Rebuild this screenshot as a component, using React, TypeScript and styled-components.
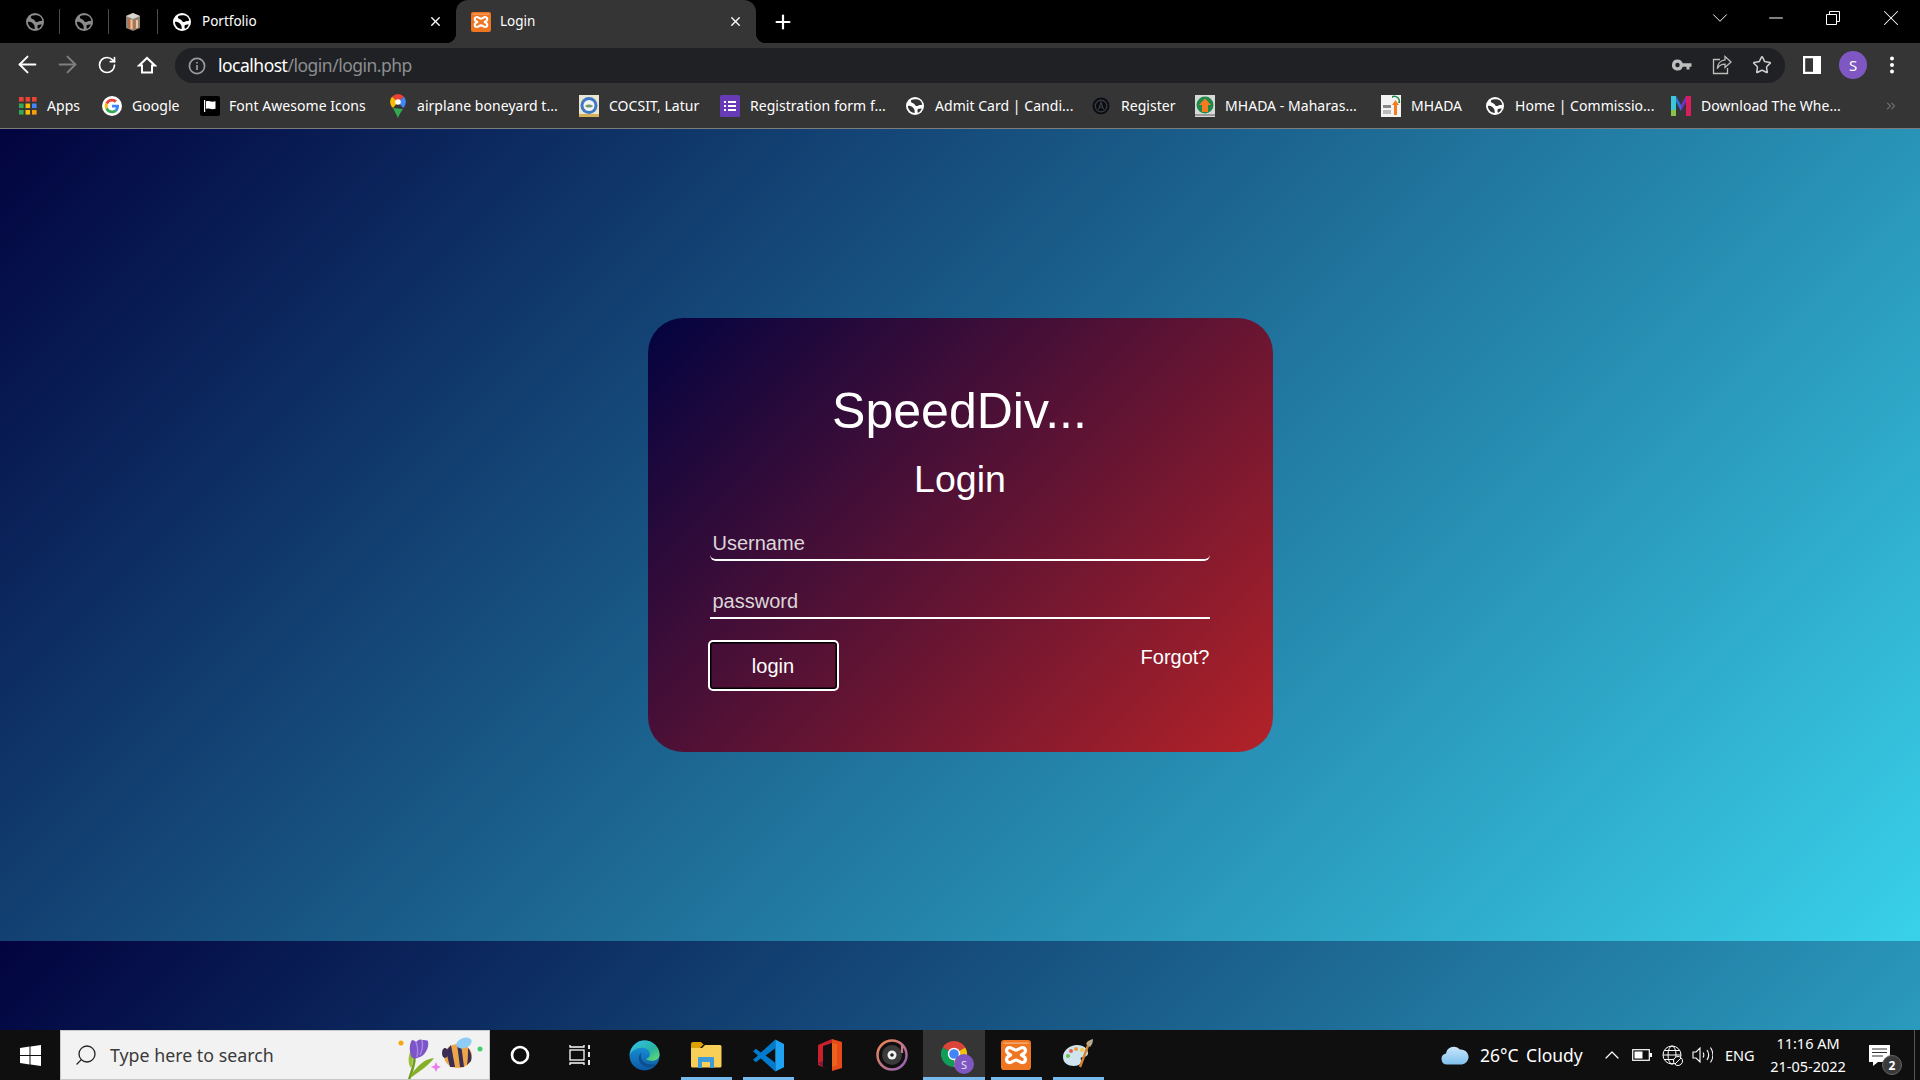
import React from "react";
import styled, { createGlobalStyle } from "styled-components";
import { ArrowLeft, ArrowRight, RotateCw, Plus, X, ChevronDown, Minus, ChevronUp, Search, Star, ChevronsRight } from "lucide-react";

const UI = `"Noto Sans", "Open Sans", sans-serif`;
const WEB = `"Liberation Sans", Arial, sans-serif`;

const Global = createGlobalStyle`
  html, body { margin: 0; padding: 0; height: 100%; overflow: hidden; background: #000; }
  * { box-sizing: border-box; }
  input::placeholder { color: #dcd6d8; opacity: 1; }
`;

const Screen = styled.div`
  width: 1920px;
  height: 1080px;
  display: flex;
  flex-direction: column;
  font-family: ${UI};
`;

/* ---------- tab strip ---------- */
const TabStrip = styled.div`
  height: 43px;
  background: #000;
  display: flex;
  align-items: stretch;
  padding-left: 11px;
  color: #fff;
`;
const PinnedTab = styled.div`
  width: 49px;
  display: flex;
  align-items: center;
  justify-content: center;
  & > span {
    width: 100%;
    height: 25px;
    display: flex;
    align-items: center;
    justify-content: center;
    border-right: 1px solid #4c4c4c;
  }
`;
const Tab = styled.div<{ $active?: boolean; $width: number; $pad: number; $gap: number }>`
  width: ${(p) => p.$width}px;
  padding: 0 13px 0 ${(p) => p.$pad}px;
  display: flex;
  align-items: center;
  gap: ${(p) => p.$gap}px;
  font-size: 13.5px;
  position: relative;
  background: ${(p) => (p.$active ? "#353535" : "transparent")};
  border-radius: ${(p) => (p.$active ? "12px 12px 0 0" : "0")};
  ${(p) =>
    p.$active &&
    `&::before, &::after {
      content: ""; position: absolute; bottom: 0; width: 10px; height: 10px;
    }
    &::before { left: -10px; background: radial-gradient(circle at 0 0, #000 10px, #353535 10.5px); }
    &::after { right: -10px; background: radial-gradient(circle at 100% 0, #000 10px, #353535 10.5px); }`}
`;
const TabTitle = styled.span`
  flex: 1;
  white-space: nowrap;
  padding-bottom: 2px;
`;
const NewTab = styled.div`
  width: 34px;
  margin-left: 10px;
  display: flex;
  align-items: center;
  justify-content: center;
`;
const WindowControls = styled.div`
  margin-left: auto;
  display: flex;
  align-items: center;
  height: 36px;
`;
const WindowButton = styled.div<{ $width: number }>`
  width: ${(p) => p.$width}px;
  display: flex;
  align-items: center;
  justify-content: center;
`;

/* ---------- toolbar ---------- */
const Toolbar = styled.div`
  height: 40px;
  background: #353535;
  display: flex;
  align-items: flex-start;
  padding: 5px 0 0 7px;
  color: #fff;
`;
const ToolButton = styled.div`
  width: 40px;
  height: 35px;
  flex: none;
  padding-bottom: 2px;
  display: flex;
  align-items: center;
  justify-content: center;
`;
const Omnibox = styled.div`
  width: 1610px;
  height: 35px;
  margin: 0 7px 0 8px;
  background: #202124;
  border-radius: 18px;
  display: flex;
  align-items: center;
  padding: 0 3px 0 13px;
`;
const UrlText = styled.div`
  margin-left: 12px;
  padding-bottom: 2px;
  font-size: 17.5px;
  letter-spacing: -0.5px;
  flex: 1;
  white-space: nowrap;
  color: #8c8e91;
  & > b { font-weight: 400; color: #fff; }
`;
const Avatar = styled.div`
  width: 28px;
  height: 28px;
  margin-left: 2px;
  border-radius: 50%;
  background: #7e57c2;
  color: #fff;
  font-size: 15px;
  display: flex;
  align-items: center;
  justify-content: center;
`;

/* ---------- bookmarks ---------- */
const BookmarkBar = styled.div`
  height: 46px;
  background: #353535;
  border-bottom: 1px solid #7c7c7c;
  display: flex;
  align-items: center;
  padding-left: 19px;
  color: #fff;
  font-size: 14px;
  letter-spacing: 0.04px;
`;
const Bookmark = styled.div<{ $width: number; $gap: number }>`
  width: ${(p) => p.$width}px;
  flex: none;
  display: flex;
  align-items: center;
  gap: ${(p) => p.$gap}px;
  white-space: nowrap;
`;
const More = styled.div`
  margin-left: 23px;
  color: #6f6f6f;
  display: flex;
`;

/* ---------- page ---------- */
const Viewport = styled.main`
  flex: 1;
  background: linear-gradient(135deg, #02033f 0%, #39d1ea 100%) 0 0 / 100% 812px repeat;
`;
const PageBody = styled.div`
  height: 812px;
  display: flex;
  align-items: center;
  justify-content: center;
`;
const Card = styled.form`
  width: 625px;
  padding: 64px 63px 61px 60px;
  border-radius: 35px;
  background: linear-gradient(135deg, #020340 0%, #b32228 100%);
  font-family: ${WEB};
  color: #fff;
  display: flex;
  flex-direction: column;
`;
const Title = styled.h1`
  margin: 0;
  padding: 1px 0 0 2px;
  font-size: 50px;
  line-height: 56px;
  font-weight: 400;
  text-align: center;
`;
const Subtitle = styled.h2`
  margin: 19px 0 0;
  padding-left: 3px;
  font-size: 37.5px;
  line-height: 42px;
  font-weight: 400;
  text-align: center;
`;
const Field = styled.input<{ $rounded?: boolean; $top: number }>`
  display: block;
  margin: ${(p) => p.$top}px 0 0 2px;
  width: calc(100% - 2px);
  height: 30px;
  padding: 0 2px 4px 3px;
  background: transparent;
  border: none;
  border-bottom: 2px solid #fff;
  border-radius: ${(p) => (p.$rounded ? "0 0 6px 6px" : "0")};
  font: 20px ${WEB};
  color: #fff;
  outline: none;
`;
const ActionRow = styled.div`
  margin-top: 21px;
  display: flex;
  justify-content: space-between;
  align-items: flex-start;
`;
const LoginButton = styled.button`
  width: 131px;
  height: 51px;
  background: transparent;
  border: 2px solid #fff;
  border-radius: 5px;
  box-shadow: inset 0 0 0 1.5px #000;
  color: #fff;
  font: 20px ${WEB};
  padding: 2px 0 0;
`;
const ForgotLink = styled.a`
  margin-top: 6px;
  font-size: 20px;
  line-height: 23px;
  color: #fff;
`;

/* ---------- taskbar ---------- */
const Taskbar = styled.footer`
  height: 50px;
  flex: none;
  background: #0f0f0f;
  display: flex;
  align-items: stretch;
  color: #fff;
`;
const StartButton = styled.div`
  width: 60px;
  display: flex;
  align-items: center;
  justify-content: center;
`;
const SearchBox = styled.div`
  width: 430px;
  background: #f2f2f2;
  border: 1px solid #c8c8c8;
  display: flex;
  align-items: center;
  padding-left: 13px;
  color: #3a3a3a;
  font-size: 17.8px;
  overflow: hidden;
`;
const SearchText = styled.span`
  margin-left: 12px;
  flex: 1;
`;
const SystemButton = styled.div`
  width: 60px;
  display: flex;
  align-items: center;
  justify-content: center;
`;
const AppList = styled.div`
  margin-left: 3px;
  display: flex;
`;
const AppButton = styled.div<{ $open?: boolean; $active?: boolean }>`
  width: 62px;
  position: relative;
  display: flex;
  align-items: center;
  justify-content: center;
  background: ${(p) => (p.$active ? "#353535" : "transparent")};
  &::after {
    content: "";
    display: ${(p) => (p.$open ? "block" : "none")};
    position: absolute;
    bottom: 0;
    left: ${(p) => (p.$active ? 0 : 6)}px;
    right: ${(p) => (p.$active ? 0 : 5)}px;
    height: 3px;
    background: #76b9ed;
  }
`;
const ChromeWrap = styled.div`
  position: relative;
  width: 32px;
  height: 32px;
`;
const ProfileBadge = styled.span`
  position: absolute;
  right: -4px;
  bottom: -3px;
  width: 20px;
  height: 20px;
  border-radius: 50%;
  background: #7e57c2;
  color: #e8e0f8;
  font-size: 11px;
  display: flex;
  align-items: center;
  justify-content: center;
`;
const Tray = styled.div`
  margin-left: auto;
  display: flex;
  align-items: center;
  font-size: 17.5px;
`;
const TrayCell = styled.div<{ $width: number }>`
  width: ${(p) => p.$width}px;
  display: flex;
  align-items: center;
  justify-content: center;
  white-space: nowrap;
`;
const Weather = styled.div`
  font-size: 17.5px;
  width: 122px;
  padding-left: 5px;
  word-spacing: 3px;
  white-space: nowrap;
`;
const Lang = styled.div`
  width: 51px;
  padding-left: 8px;
  font-size: 14.5px;
`;
const Clock = styled.div`
  width: 80px;
  text-align: center;
  font-size: 14.5px;
  line-height: 23px;
  white-space: nowrap;
`;
const NotifyCell = styled.div`
  width: 66px;
  height: 100%;
  padding-right: 4px;
  position: relative;
  display: flex;
  align-items: center;
  justify-content: center;
`;
const NotifyBadge = styled.span`
  position: absolute;
  left: 34px;
  top: 25px;
  width: 20px;
  height: 20px;
  border-radius: 50%;
  background: #3a3a3a;
  border: 1px solid #666;
  font-size: 12px;
  font-weight: 700;
  display: flex;
  align-items: center;
  justify-content: center;
`;
const ShowDesktop = styled.div`
  width: 6px;
  height: 100%;
  border-left: 1px solid #555;
`;

/* ---------- drawings ---------- */
const Globe = ({ size = 18, color = "#fff", ink = "#000" }: { size?: number; color?: string; ink?: string }) => (
  <svg width={size} height={size} viewBox="0 0 24 24">
    <circle cx="12" cy="12" r="12" fill={color} />
    <path fill={ink} d="M7 4C10 2.500 16 2.500 19 5 20.500 6.500 21.300 8 21.700 10 19.500 11 17.500 10.500 16 11.500 14 13 12 11 11.500 9.500 10 8 7 8 6.500 6Z" />
    <path fill={ink} d="M2.500 12C5 11 8.500 12.500 10 15 11 16.500 12 18 11.500 21.400 6.500 21 2.800 17 2.500 12Z" />
    <path fill={ink} d="M16 16C18 15 20 15 21 15.500 20 18 18 20 16 21 15 19.500 15 17 16 16Z" />
  </svg>
);
const Xampp = ({ size = 20 }: { size?: number }) => (
  <svg width={size} height={size} viewBox="0 0 24 24">
    <rect width="24" height="24" rx="2.500" fill="#ee7623" />
    <rect x="2" y="2" width="20" height="1" fill="#f7b482" />
    <path fill="none" stroke="#fff" strokeWidth="2.600" strokeLinejoin="round" d="M7 6C9 6 10 8 12 8S15 6 17 6c3 0 3.400 3.600 1 5l-1.600 1 1.600 1c2.400 1.400 2 5-1 5-2 0-3-2-5-2s-3 2-5 2c-3 0-3.400-3.600-1-5L7.600 12 6 11C3.600 9.600 4 6 7 6Z" />
  </svg>
);
const BoxIcon = () => (
  <svg width="18" height="20" viewBox="0 0 18 20">
    <path fill="#8d8478" d="M9 1 16 4v12l-7 3-7-3V4Z" />
    <path fill="#d9d4cc" d="M9 1 16 4 9 7 2 4Z" />
    <path fill="#c46a3c" d="M4 7h2v9H4zM9 8h2v10H9z" />
    <path fill="#e9c9a4" d="M6.500 7.500h2V17h-2zM12 8h2v8h-2z" />
  </svg>
);
const HomeIcon = () => (
  <svg width="20" height="20" viewBox="0 0 24 24" fill="none" stroke="#fff" strokeWidth="2.400">
    <path d="M2.500 12.500 12 3.500l9.500 9H18V21H6v-8.500Z" strokeLinejoin="miter" />
  </svg>
);
const InfoIcon = () => (
  <svg width="18" height="18" viewBox="0 0 18 18" fill="none">
    <circle cx="9" cy="9" r="7.600" stroke="#9a9b9d" strokeWidth="1.700" />
    <path d="M9 8v5M9 5v1.600" stroke="#9a9b9d" strokeWidth="1.700" />
  </svg>
);
const KeyIcon = () => (
  <svg width="20" height="12" viewBox="0 0 20 12">
    <path fill="#bdbdbd" fillRule="evenodd" d="M5.500 0.500a5.500 5.500 0 0 1 5.200 3.800H19.500v3.400H17.500v2.800h-3V7.700h-3.800A5.500 5.500 0 1 1 5.500.5Zm0 3.300a2.200 2.200 0 1 0 0 4.400 2.200 2.200 0 0 0 0-4.400Z" />
  </svg>
);
const ShareIcon = () => (
  <svg width="20" height="20" viewBox="0 0 20 20" fill="none" stroke="#bdbdbd" strokeWidth="1.300">
    <path d="M8 4.500H1.500v14h14V13" />
    <path d="M13 1.500 19 7l-6 5.500V9.200C9.500 9.200 7 10.500 5.300 13.600 5.600 9 8.400 5.200 13 4.800Z" />
  </svg>
);
const SidePanel = () => (
  <svg width="18" height="18" viewBox="0 0 18 18">
    <path fill="#fff" fillRule="evenodd" d="M0 0h18v18H0Zm2.200 2.200v13.600h7.800V2.200Z" />
  </svg>
);
const Dots = () => (
  <svg width="6" height="18" viewBox="0 0 6 18" fill="#fff">
    <circle cx="3" cy="2.500" r="2" /><circle cx="3" cy="9" r="2" /><circle cx="3" cy="15.500" r="2" />
  </svg>
);
const AppsGrid = () => (
  <svg width="18" height="18" viewBox="0 0 18 18">
    {["#ea4335","#ea4335","#ea4335","#34a853","#fbbc05","#4285f4","#34a853","#fbbc05","#f59e0b"].map((c, i) => (
      <rect key={i} x={(i % 3) * 6.5} y={Math.floor(i / 3) * 6.5} width="4.600" height="4.600" fill={c} />
    ))}
  </svg>
);
const GoogleIcon = () => (
  <svg width="20" height="20" viewBox="0 0 48 48">
    <circle cx="24" cy="24" r="24" fill="#fff" />
    <g transform="translate(6.500 6.500) scale(.73)">
      <path fill="#EA4335" d="M24 9.500c3.500 0 6.700 1.200 9.200 3.600l6.900-6.900C35.900 2.400 30.500 0 24 0 14.600 0 6.500 5.400 2.600 13.200l8 6.200C12.400 13.700 17.700 9.500 24 9.500Z" />
      <path fill="#4285F4" d="M47 24.500c0-1.600-.1-3.100-.4-4.500H24v9h12.900c-.6 3-2.200 5.500-4.700 7.200l7.700 6c4.500-4.200 7.100-10.300 7.100-17.700Z" />
      <path fill="#FBBC05" d="M10.500 28.600c-.5-1.400-.8-3-.8-4.600s.3-3.200.8-4.600l-8-6.200C.9 16.500 0 20.100 0 24s.9 7.500 2.600 10.800Z" />
      <path fill="#34A853" d="M24 48c6.500 0 11.900-2.100 15.900-5.800l-7.700-6c-2.200 1.500-4.900 2.300-8.200 2.300-6.300 0-11.600-4.200-13.500-9.900l-8 6.200C6.500 42.600 14.600 48 24 48Z" />
    </g>
  </svg>
);
const FlagIcon = () => (
  <svg width="20" height="20" viewBox="0 0 20 20">
    <rect width="20" height="20" rx="2" fill="#000" />
    <path fill="#fff" d="M4 4h1.200v12H4zM6 5.500c2.500-1.400 4.500 1.200 9.500-.2v7.400c-5 1.400-7-1.200-9.500.2Z" />
  </svg>
);
const PinIcon = () => (
  <svg width="16" height="24" viewBox="0 0 16 24">
    <path fill="#34a853" d="M3 14 8 24c1-3 3-6 5-9Z" />
    <path fill="#ea4335" d="M8 0a8 8 0 0 1 6 2.700L8 8 2 2.700A8 8 0 0 1 8 0Z" />
    <path fill="#4285f4" d="M14 2.700A8 8 0 0 1 13 14L8 8Z" />
    <path fill="#fbbc05" d="M2 2.700A8 8 0 0 0 3 14L8 8Z" />
    <circle cx="8" cy="8" r="2.800" fill="#fff" />
  </svg>
);
const CocsitIcon = () => (
  <svg width="20" height="22" viewBox="0 0 20 22">
    <rect width="20" height="22" fill="#e9e6d4" />
    <circle cx="10" cy="10.500" r="8.500" fill="#3f78c4" />
    <circle cx="10" cy="10.500" r="5.500" fill="#f2f2f2" />
    <path d="M6 11c2-2 6-2 8 0-2 2-6 2-8 0Z" fill="#6c9a6c" />
    <rect y="19" width="20" height="3" fill="#d6b35a" />
  </svg>
);
const FormsIcon = () => (
  <svg width="20" height="22" viewBox="0 0 20 22">
    <rect width="20" height="22" rx="1.500" fill="#673ab7" />
    <path fill="#fff" d="M4 6h2v2H4zM8 6h8v2H8zM4 10h2v2H4zM8 10h8v2H8zM4 14h2v2H4zM8 14h8v2H8z" />
  </svg>
);
const RegisterIcon = () => (
  <svg width="18" height="18" viewBox="0 0 18 18" fill="none">
    <circle cx="9" cy="9" r="8.500" fill="#0b0d12" />
    <circle cx="9" cy="9" r="5.800" stroke="#3b3f46" strokeWidth="1.200" />
    <path d="M6.500 12.500 9 5.500l2.500 7M7.400 10.300h3.200" stroke="#3b3f46" strokeWidth="1.100" />
  </svg>
);
const MhadaIcon = () => (
  <svg width="20" height="22" viewBox="0 0 20 22">
    <rect width="20" height="22" fill="#d8d8d8" />
    <circle cx="10" cy="10" r="8.500" fill="#1c8a4a" />
    <path fill="#f47b20" d="M10 3.500 16 10h-3v7H7v-7H4Z" />
    <rect y="19" width="20" height="2" fill="#9a9a9a" />
  </svg>
);
const MhadaSmallIcon = () => (
  <svg width="20" height="22" viewBox="0 0 20 22">
    <rect width="20" height="22" fill="#f3f3f3" />
    <path fill="#1c8a4a" d="M11 1a6 6 0 0 1 8 7h-2a4 4 0 0 0-6-5Z" />
    <path fill="#f47b20" d="M14.500 5 18 10h-2v10h-3V10h-2Z" />
    <rect x="2" y="10" width="8" height="3" fill="#888" />
    <rect x="2" y="15" width="8" height="4" fill="#bbb" />
  </svg>
);
const MLogo = () => (
  <svg width="20" height="20" viewBox="0 0 20 20">
    <path fill="#3cc7d9" d="M0 0h5v14H0Z" />
    <path fill="#8bc34a" d="M0 14h5v6H0Z" />
    <path fill="#2f6fd6" d="M5 0 10 9v6L5 6Z" />
    <path fill="#7a2fc4" d="M15 0 10 9v6l5-9Z" />
    <path fill="#d81e5b" d="M15 0h5v20h-5Z" />
  </svg>
);
const WindowsLogo = () => (
  <svg width="21" height="21" viewBox="0 0 21 21" fill="#fff">
    <path d="M0 3 9.500 1.600V10H0ZM10.500 1.400 21 0V10H10.500ZM0 11h9.500v8.400L0 18ZM10.500 11H21v10l-10.500-1.500Z" />
  </svg>
);
const CortanaRing = () => (
  <svg width="20" height="20" viewBox="0 0 20 20" fill="none">
    <circle cx="10" cy="10" r="8" stroke="#fff" strokeWidth="2.600" />
  </svg>
);
const TaskView = () => (
  <svg width="22" height="22" viewBox="0 0 22 22" fill="none" stroke="#fff" strokeWidth="1.300">
    <path d="M1 1v2h14V1M1 21v-2h14v2" />
    <rect x="1" y="6" width="14" height="10" />
    <path d="M20 1v4M20 8v5M20 16v5" strokeWidth="1.800" />
  </svg>
);
const TulipBee = () => (
  <svg width="93" height="50" viewBox="0 0 93 50">
    <circle cx="5" cy="13" r="2.500" fill="#f5a90d" />
    <path d="M13 50C16 40 20 32 18 22" stroke="#6f9d1f" strokeWidth="2.500" fill="none" />
    <path d="M14 48c8-5 20-14 24-20-10 1-16 8-21 14Z" fill="#86b026" />
    <path d="M15 38c-3-4-3-10-1-16 3 4 4 10 1 16Z" fill="#9bc13a" />
    <path d="M16 28c-3-6-3-14 0-18 2 0 3 1 4 2 2-2 4-3 6-2 3 0 5 0 6 1 1 5-1 11-6 15-4 2-7 3-10 2Z" fill="#7d55c9" />
    <path d="M20 12c2 5 2 10 1 15M26 10c1 5 0 11-2 15" stroke="#a688e0" strokeWidth="1.500" fill="none" />
    <path d="M40 32l1.500 3.500 3.500 1.500-3.500 1.500L40 42l-1.500-3.500L35 37l3.500-1.500Z" fill="#ec7de8" />
    <ellipse cx="62" cy="26" rx="14" ry="12" fill="#eba64a" />
    <path d="M55 15l4 22h-5l-4-16ZM65 14l3 23h-4l-3-23Z" fill="#3a2d55" />
    <path d="M72 18c3 3 4 9 3 13l-4 4c1-5 1-12 1-17Z" fill="#3a2d55" />
    <ellipse cx="49" cy="23" rx="3" ry="5" fill="#3a2d55" />
    <ellipse cx="68" cy="13" rx="8" ry="5" fill="#8dcdf5" transform="rotate(-20 68 13)" />
    <circle cx="84" cy="19" r="2.500" fill="#3ecf6e" />
  </svg>
);
const EdgeIcon = () => (
  <svg width="31" height="31" viewBox="0 0 32 32">
    <defs>
      <linearGradient id="eg1" x1="0" y1="0" x2="1" y2="1"><stop offset="0" stopColor="#35c1f1" /><stop offset=".6" stopColor="#28b5a0" /><stop offset="1" stopColor="#6fe06a" /></linearGradient>
      <linearGradient id="eg2" x1="0" y1="0" x2="0" y2="1"><stop offset="0" stopColor="#1b9de2" /><stop offset="1" stopColor="#0c59a4" /></linearGradient>
    </defs>
    <circle cx="16" cy="16" r="15.500" fill="url(#eg2)" />
    <path fill="url(#eg1)" d="M16 .5C24.500.5 31.500 7 31.500 15c0 4-3.500 6.500-7.500 6.500-3 0-5.500-1-6.500-2 3-1 4.500-3 4-5.500C21 10 17 8 13 8 8 8 3 11 .7 15.500 1.500 7 8 .5 16 .5Z" />
    <path fill="#0e4f8f" d="M13 13c-4 3-4 9 1 13 4 3 9 3 13 0 .8-.6.300-1.300-.6-1-4 1-9 0-12-3-2.500-3-3-6-1.400-9Z" />
  </svg>
);
const FolderIcon = () => (
  <svg width="32" height="26" viewBox="0 0 32 26">
    <path fill="#e0a100" d="M1 2a2 2 0 0 1 2-2h8l3 3h-1l-3 3H1Z" />
    <path fill="#f9cf58" d="M1 6h11l3-3h15a1.500 1.500 0 0 1 1.500 1.500V24a1.500 1.500 0 0 1-1.500 1.500H2.500A1.500 1.500 0 0 1 1 24Z" />
    <path fill="#3c9bd8" d="M9 15h14a1 1 0 0 1 1 1v10h-4v-6h-8v6H8V16a1 1 0 0 1 1-1Z" />
  </svg>
);
const VSCodeIcon = () => (
  <svg width="31" height="33" viewBox="0 0 32 33">
    <path fill="#007acc" d="M3 9.500 8 13.500 23 0v9L13 16.500 23 24v9L8 19.500 3 23.500 0 21l5-4.500L0 12Z" />
    <path fill="#1fa2f2" d="M23 0 32 4.500v24L23 33Z" />
  </svg>
);
const OfficeIcon = () => (
  <svg width="24" height="32" viewBox="0 0 24 32">
    <path fill="#e64a19" d="M14 0 24 3v26l-10 3Z" />
    <path fill="#c9202c" d="M14 0 0 6v20l14 6-9-4V7l9-3Z" />
    <path fill="#f47b20" d="M14 4v24l5-2V5Z" opacity=".5" />
    <path fill="#7b1a3a" d="M0 24 5 22v6Z" />
  </svg>
);
const GrooveIcon = () => (
  <svg width="32" height="32" viewBox="0 0 32 32" fill="none">
    <defs>
      <linearGradient id="gr" x1="0" y1="0" x2="1" y2="1"><stop offset="0" stopColor="#f08a4b" /><stop offset="1" stopColor="#8f5fb8" /></linearGradient>
    </defs>
    <circle cx="16" cy="16" r="14.500" stroke="url(#gr)" strokeWidth="2.500" />
    <circle cx="16" cy="16" r="10" fill="#3b3b3b" />
    <circle cx="16" cy="16" r="4.500" fill="#f2f2f2" />
    <circle cx="16" cy="16" r="1.800" fill="#222" />
    <path d="M26 6v8" stroke="#c47a8c" strokeWidth="2.200" />
  </svg>
);
const ChromeIcon = () => (
  <svg width="32" height="32" viewBox="0 0 32 32">
    <path fill="#db4437" d="M16 15 4.740 8.500A13 13 0 0 1 27.260 8.500Z" />
    <path fill="#f4c20d" d="M16 15 27.260 8.500A13 13 0 0 1 16 28Z" />
    <path fill="#0f9d58" d="M16 15 16 28A13 13 0 0 1 4.740 8.500Z" />
    <circle cx="16" cy="15" r="6.200" fill="#fff" />
    <circle cx="16" cy="15" r="4.800" fill="#4285f4" />
  </svg>
);
const PaletteIcon = () => (
  <svg width="32" height="32" viewBox="0 0 32 32">
    <path fill="#cfe4ef" d="M1 18C1 11 8 6 15 6s11 4 11 8c0 3-3 4-5 4s-3 1-2 3c1 3-2 6-7 6C6 27 1 24 1 18Z" />
    <circle cx="6" cy="17" r="2" fill="#6cc24a" />
    <circle cx="9" cy="12" r="2" fill="#e35d5d" />
    <circle cx="14" cy="10" r="2" fill="#ef9a3c" />
    <circle cx="20" cy="11" r="2" fill="#f2c744" />
    <path d="M27 4 18 28" stroke="#d8812c" strokeWidth="2.400" />
    <path d="M24 5c1-3 4-4 7-5 0 3-1 6-3 8Z" fill="#b9a98a" />
  </svg>
);
const CloudIcon = () => (
  <svg width="28" height="20" viewBox="0 0 28 20">
    <defs>
      <linearGradient id="cl" x1="0" y1="0" x2="0" y2="1"><stop offset="0" stopColor="#c9e6fa" /><stop offset="1" stopColor="#7fc0ee" /></linearGradient>
    </defs>
    <path fill="url(#cl)" d="M6 19.500A5.500 5.500 0 0 1 5 8.600 8 8 0 0 1 19 4.500 7.500 7.500 0 0 1 21 19.500Z" />
  </svg>
);
const BatteryIcon = () => (
  <svg width="20" height="12" viewBox="0 0 20 12" fill="none">
    <rect x=".7" y=".7" width="16.600" height="10.600" stroke="#fff" strokeWidth="1.200" />
    <rect x="2.500" y="2.500" width="8" height="7" fill="#fff" />
    <rect x="18" y="4" width="2" height="4" fill="#fff" />
  </svg>
);
const NetworkIcon = () => (
  <svg width="21" height="21" viewBox="0 0 21 21" fill="none" stroke="#fff" strokeWidth="1">
    <circle cx="10" cy="10" r="9" />
    <ellipse cx="10" cy="10" rx="4" ry="9" />
    <path d="M1 10h18M2.500 5.500h15M2.500 14.500h15" />
    <circle cx="16" cy="16" r="4.500" fill="#0f0f0f" />
    <path d="M13 19l6-6" />
  </svg>
);
const SpeakerIcon = () => (
  <svg width="21" height="18" viewBox="0 0 21 18" fill="none" stroke="#fff" strokeWidth="1.100">
    <path d="M1 6h3l4-4v14l-4-4H1Z" />
    <path d="M11 6.500c1 1.500 1 3.500 0 5M15 4c2 3 2 7 0 10M18.500 1.500c3 4.500 3 10.500 0 15" />
  </svg>
);
const NotifyIcon = () => (
  <svg width="21" height="21" viewBox="0 0 21 21">
    <path fill="#fff" d="M0 0h21v17H9l-5 4v-4H0Z" />
    <path stroke="#333" strokeWidth="1.100" d="M3 4h15M3 7.500h15M3 11h11" />
  </svg>
);

/* ---------- data ---------- */
const bookmarks: { label: string; width: number; gap: number; icon: React.ReactNode }[] = [
  { label: "Apps", width: 83, gap: 10, icon: <AppsGrid /> },
  { label: "Google", width: 98, gap: 10, icon: <GoogleIcon /> },
  { label: "Font Awesome Icons", width: 190, gap: 9, icon: <FlagIcon /> },
  { label: "airplane boneyard t...", width: 189, gap: 11, icon: <PinIcon /> },
  { label: "COCSIT, Latur", width: 141, gap: 10, icon: <CocsitIcon /> },
  { label: "Registration form f...", width: 186, gap: 10, icon: <FormsIcon /> },
  { label: "Admit Card | Candi...", width: 186, gap: 11, icon: <Globe size={18} ink="#353535" /> },
  { label: "Register", width: 103, gap: 11, icon: <RegisterIcon /> },
  { label: "MHADA - Maharas...", width: 186, gap: 10, icon: <MhadaIcon /> },
  { label: "MHADA", width: 105, gap: 10, icon: <MhadaSmallIcon /> },
  { label: "Home | Commissio...", width: 185, gap: 11, icon: <Globe size={18} ink="#353535" /> },
  { label: "Download The Whe...", width: 190, gap: 10, icon: <MLogo /> },
];

export default function App() {
  return (
    <Screen>
      <Global />
      <TabStrip>
        <PinnedTab><span><Globe color="#8a8a8a" /></span></PinnedTab>
        <PinnedTab><span><Globe color="#8a8a8a" /></span></PinnedTab>
        <PinnedTab><span><BoxIcon /></span></PinnedTab>
        <Tab $width={298} $pad={15} $gap={11}>
          <Globe />
          <TabTitle>Portfolio</TabTitle>
          <X size={15} strokeWidth={2.2} />
        </Tab>
        <Tab $active $width={300} $pad={15} $gap={9}>
          <Xampp />
          <TabTitle>Login</TabTitle>
          <X size={15} strokeWidth={2.2} />
        </Tab>
        <NewTab><Plus size={22} strokeWidth={2.4} /></NewTab>
        <WindowControls>
          <WindowButton $width={54}><ChevronDown size={26} strokeWidth={0.9} /></WindowButton>
          <WindowButton $width={57}><Minus size={22} strokeWidth={1.1} /></WindowButton>
          <WindowButton $width={58}>
            <svg width="14" height="14" viewBox="0 0 14 14" fill="none" stroke="#fff"><path d="M.5 3.500h10v10H.5ZM3.500 3.500v-3h10v10h-3" /></svg>
          </WindowButton>
          <WindowButton $width={58}><X size={26} strokeWidth={0.95} /></WindowButton>
        </WindowControls>
      </TabStrip>

      <Toolbar>
        <ToolButton><ArrowLeft size={27} strokeWidth={1.7} /></ToolButton>
        <ToolButton><ArrowRight size={27} strokeWidth={1.7} color="#7f7f7f" /></ToolButton>
        <ToolButton><RotateCw size={20} strokeWidth={2} /></ToolButton>
        <ToolButton><HomeIcon /></ToolButton>
        <Omnibox>
          <InfoIcon />
          <UrlText><b>localhost</b>/login/login.php</UrlText>
          <ToolButton><KeyIcon /></ToolButton>
          <ToolButton><ShareIcon /></ToolButton>
          <ToolButton><Star size={20} strokeWidth={1.8} color="#d0d0d0" /></ToolButton>
        </Omnibox>
        <ToolButton><SidePanel /></ToolButton>
        <ToolButton><Avatar>S</Avatar></ToolButton>
        <ToolButton><Dots /></ToolButton>
      </Toolbar>

      <BookmarkBar>
        {bookmarks.map((b) => (
          <Bookmark key={b.label} $width={b.width} $gap={b.gap}>
            {b.icon}
            <span>{b.label}</span>
          </Bookmark>
        ))}
        <More><ChevronsRight size={14} /></More>
      </BookmarkBar>

      <Viewport>
        <PageBody>
          <Card>
            <Title>SpeedDiv...</Title>
            <Subtitle>Login</Subtitle>
            <Field $rounded $top={31} placeholder="Username" />
            <Field $top={28} placeholder="password" />
            <ActionRow>
              <LoginButton type="button">login</LoginButton>
              <ForgotLink>Forgot?</ForgotLink>
            </ActionRow>
          </Card>
        </PageBody>
      </Viewport>

      <Taskbar>
        <StartButton><WindowsLogo /></StartButton>
        <SearchBox>
          <Search size={24} strokeWidth={1.3} color="#222" style={{ transform: "scaleX(-1)" }} />
          <SearchText>Type here to search</SearchText>
          <TulipBee />
        </SearchBox>
        <SystemButton><CortanaRing /></SystemButton>
        <SystemButton><TaskView /></SystemButton>
        <AppList>
          <AppButton><EdgeIcon /></AppButton>
          <AppButton $open><FolderIcon /></AppButton>
          <AppButton $open><VSCodeIcon /></AppButton>
          <AppButton><OfficeIcon /></AppButton>
          <AppButton><GrooveIcon /></AppButton>
          <AppButton $open $active>
            <ChromeWrap><ChromeIcon /><ProfileBadge>S</ProfileBadge></ChromeWrap>
          </AppButton>
          <AppButton $open><Xampp size={30} /></AppButton>
          <AppButton $open><PaletteIcon /></AppButton>
        </AppList>
        <Tray>
          <TrayCell $width={40}><CloudIcon /></TrayCell>
          <Weather>26°C Cloudy</Weather>
          <TrayCell $width={30}><ChevronUp size={24} strokeWidth={1.2} /></TrayCell>
          <TrayCell $width={30}><BatteryIcon /></TrayCell>
          <TrayCell $width={30}><NetworkIcon /></TrayCell>
          <TrayCell $width={30}><SpeakerIcon /></TrayCell>
          <Lang>ENG</Lang>
          <Clock>11:16 AM<br />21-05-2022</Clock>
          <NotifyCell>
            <NotifyIcon />
            <NotifyBadge>2</NotifyBadge>
          </NotifyCell>
          <ShowDesktop />
        </Tray>
      </Taskbar>
    </Screen>
  );
}
